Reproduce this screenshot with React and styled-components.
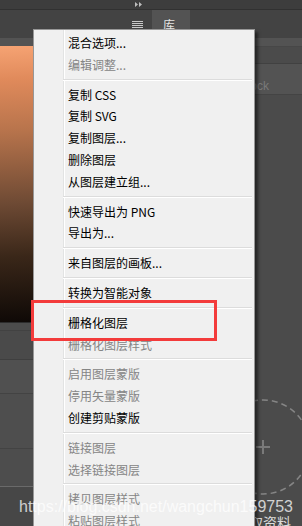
import styled, { createGlobalStyle } from "styled-components";

const GlobalStyle = createGlobalStyle`
  html, body {
    margin: 0;
    padding: 0;
    background: #4b4b4b;
  }
  body {
    overflow: hidden;
  }
  * {
    box-sizing: border-box;
  }
`;

// menu entries, "sep" marks a separator line
const MENU = [
  { label: "混合选项..." },
  { label: "编辑调整...", disabled: true },
  "sep",
  { label: "复制 CSS" },
  { label: "复制 SVG" },
  { label: "复制图层..." },
  { label: "删除图层" },
  { label: "从图层建立组..." },
  "sep",
  { label: "快速导出为 PNG" },
  { label: "导出为..." },
  "sep",
  { label: "来自图层的画板..." },
  "sep",
  { label: "转换为智能对象" },
  "sep",
  { label: "栅格化图层" },
  { label: "栅格化图层样式", disabled: true },
  "sep",
  { label: "启用图层蒙版", disabled: true },
  { label: "停用矢量蒙版", disabled: true },
  { label: "创建剪贴蒙版" },
  "sep",
  { label: "链接图层", disabled: true },
  { label: "选择链接图层", disabled: true },
  "sep",
  { label: "拷贝图层样式", disabled: true },
  { label: "粘贴图层样式", disabled: true },
];

// the strips of the layers panel under the canvas
const STRIPS = [
  { h: 8, bg: "#4c4c4c", line: "#424242" },
  { h: 29, bg: "#4a4a4a", line: "#3f3f3f" },
  { h: 34, bg: "#505050", line: "#434343" },
  { h: 55, bg: "#4e4e4e", line: "#434343" },
  { h: 38, bg: "#4d4d4d", line: "#6a6a6a" },
  { h: 40, bg: "#474747", line: "transparent" },
];

export default function App() {
  return (
    <Screen>
      <GlobalStyle />

      <TopStrip>
        <PanelHead>
          <svg width="8" height="5" viewBox="0 0 8 5">
            <path d="M0 0 L3 2.5 L0 5Z M4 0 L7 2.5 L4 5Z" fill="#bdbdbd" />
          </svg>
        </PanelHead>
      </TopStrip>

      <TabBar>
        <PanelHead>
          <svg width="11" height="7" viewBox="0 0 11 7">
            <rect x="0" y="0" width="11" height="1" fill="#c8c8c8" />
            <rect x="0" y="2" width="11" height="1" fill="#c8c8c8" />
            <rect x="0" y="4" width="11" height="1" fill="#c8c8c8" />
            <rect x="0" y="6" width="11" height="1" fill="#c8c8c8" />
          </svg>
        </PanelHead>
        <Tab>库</Tab>
      </TabBar>

      <Band />

      <Body>
        <LeftColumn>
          <Canvas />
          {STRIPS.map((s, i) => (
            <Strip key={i} $h={s.h} $bg={s.bg} $line={s.line} />
          ))}
        </LeftColumn>

        <RightColumn>
          <FilterRow />
          <SearchRow>Adobe Stock</SearchRow>
          <DropZone>
            <svg width="100" height="100" viewBox="0 0 100 100">
              <circle
                cx="50"
                cy="50"
                r="47"
                fill="none"
                stroke="#858585"
                strokeWidth="1.5"
                strokeDasharray="6 4"
              />
              <path d="M43 50 H57 M50 43 V57" stroke="#7a7a7a" strokeWidth="2" />
            </svg>
            <DropLabel>获取资料</DropLabel>
          </DropZone>
        </RightColumn>
      </Body>

      <Menu>
        {MENU.map((item, i) =>
          item === "sep" ? (
            <MenuSeparator key={i} />
          ) : (
            <MenuItem key={i} $disabled={item.disabled}>
              {item.label}
            </MenuItem>
          )
        )}
      </Menu>

      <Callout />

      <Watermark>https://blog.csdn.net/wangchun159753</Watermark>
    </Screen>
  );
}

const Screen = styled.div`
  position: relative;
  width: 302px;
  height: 526px;
  overflow: hidden;
  background: #4b4b4b;
  font-family: "Noto Sans CJK SC", sans-serif;
`;

const TopStrip = styled.div`
  display: flex;
  height: 10px;
  background: #3d3d3d;
  border-bottom: 1px solid #313131;
`;

const PanelHead = styled.div`
  display: flex;
  align-items: center;
  justify-content: flex-end;
  width: 151px;
  padding-right: 8px;
`;

const TabBar = styled.div`
  display: flex;
  height: 28px;
  background: #434343;
`;

const Tab = styled.div`
  display: flex;
  align-items: center;
  width: 38px;
  margin-left: 1px;
  padding-left: 11px;
  background: #535353;
  color: #e4e4e4;
  font-size: 12px;
`;

const Band = styled.div`
  height: 8px;
  background: #535353;
`;

const Body = styled.div`
  display: grid;
  grid-template-columns: 151px 151px;
`;

const LeftColumn = styled.div`
  display: flex;
  flex-direction: column;
`;

const Canvas = styled.div`
  height: 277px;
  border-bottom: 1px solid #2c2c2c;
  background: linear-gradient(
    178deg,
    #f6a373 0%,
    #e08a5b 12%,
    #b8744c 30%,
    #6e4a34 56%,
    #3a2719 75%,
    #0c0705 100%
  );
`;

const Strip = styled.div`
  height: ${(p) => p.$h}px;
  background: ${(p) => p.$bg};
  border-bottom: 1px solid ${(p) => p.$line};
`;

const RightColumn = styled.div`
  display: flex;
  flex-direction: column;
`;

const FilterRow = styled.div`
  height: 18px;
  background: #4b4b4b;
  border-top: 1px solid #474747;
  border-bottom: 1px solid #414141;
`;

const SearchRow = styled.div`
  height: 31px;
  padding: 15px 0 0 50px;
  background: #535353;
  border-bottom: 1px solid #444444;
  color: #7a7a7a;
  font-family: "Liberation Sans", sans-serif;
  font-size: 12px;
  line-height: 14px;
  white-space: nowrap;
`;

const DropZone = styled.div`
  display: flex;
  flex-direction: column;
  align-items: center;
  width: 100px;
  margin: 302px 0 0 62px;
`;

const DropLabel = styled.div`
  margin-top: 17px;
  color: #dcdcdc;
  font-size: 14px;
  line-height: 16px;
  white-space: nowrap;
`;

const Menu = styled.div`
  position: absolute;
  left: 33px;
  top: 29px;
  width: 222px;
  height: 520px;
  padding-top: 2px;
  border: 1px solid #979797;
  box-shadow: 3px 3px 3px rgba(0, 0, 0, 0.5);
  background: linear-gradient(
    90deg,
    #f0f0f0 0 29px,
    #e2e3e3 29px 30px,
    #ffffff 30px 31px,
    #f0f0f0 31px
  );
`;

const MenuItem = styled.div`
  height: 21.8px;
  padding-left: 34px;
  line-height: 21.8px;
  font-size: 12px;
  color: ${(p) => (p.$disabled ? "#858585" : "#000000")};
  white-space: nowrap;
`;

const MenuSeparator = styled.div`
  height: 2px;
  margin: 3px 2px 3px 29px;
  border-top: 1px solid #dcdcdc;
  border-bottom: 1px solid #ffffff;
`;

const Callout = styled.div`
  position: absolute;
  left: 31px;
  top: 300px;
  width: 186px;
  height: 41px;
  border: 3px solid #f33b3b;
`;

const Watermark = styled.div`
  position: absolute;
  left: 19px;
  top: 499px;
  color: rgba(255, 255, 255, 0.75);
  font-family: "Liberation Sans", sans-serif;
  font-size: 16px;
  line-height: 16px;
  white-space: nowrap;
  pointer-events: none;
`;
